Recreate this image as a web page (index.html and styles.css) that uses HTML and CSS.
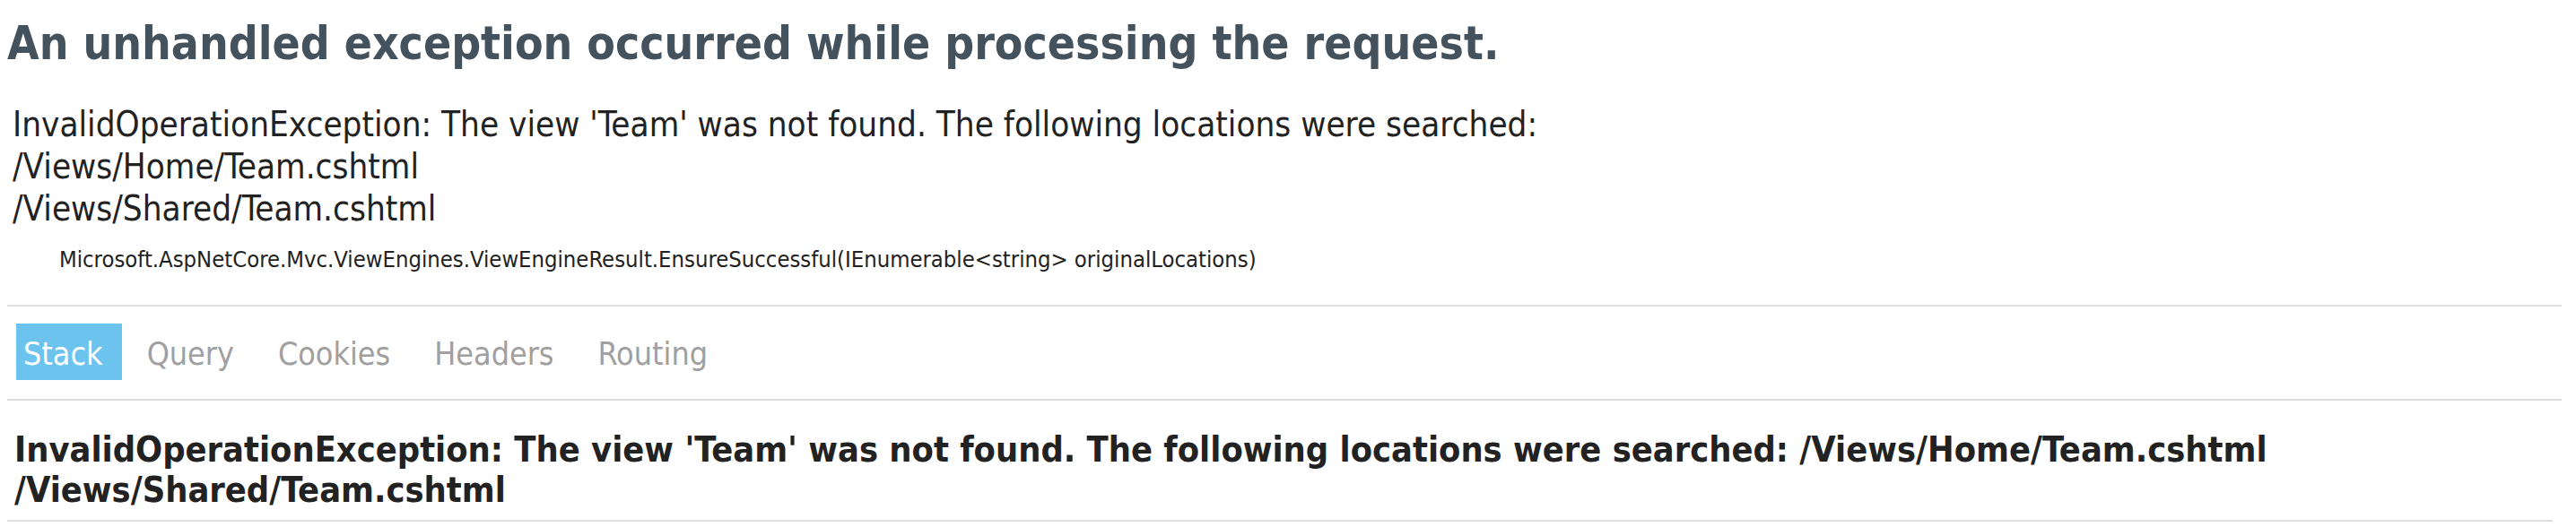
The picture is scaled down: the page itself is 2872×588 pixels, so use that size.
FILE: index.html
```html
<!DOCTYPE html>
<html>
<head>
<meta charset="utf-8">
<title>Internal Server Error</title>
<link rel="stylesheet" href="styles.css">
</head>
<body>
<h1 class="page-title">An unhandled exception occurred while processing the request.</h1>
<div class="titleerror">InvalidOperationException: The view 'Team' was not found. The following locations were searched:<br>/Views/Home/Team.cshtml<br>/Views/Shared/Team.cshtml</div>
<p class="location">Microsoft.AspNetCore.Mvc.ViewEngines.ViewEngineResult.EnsureSuccessful(IEnumerable&lt;string&gt; originalLocations)</p>
<ul class="tabs">
  <li class="tab selected">Stack</li>
  <li class="tab">Query</li>
  <li class="tab">Cookies</li>
  <li class="tab">Headers</li>
  <li class="tab">Routing</li>
</ul>
<div class="stackpage">
  <h2 class="stackerror">InvalidOperationException: The view 'Team' was not found. The following locations were searched: /Views/Home/Team.cshtml /Views/Shared/Team.cshtml</h2>
</div>
</body>
</html>
```
FILE: styles.css
```css
html, body {
  background: #fff;
}

body {
  margin: 0 16px 0 8px;
  font-family: "DejaVu Sans Condensed", "DejaVu Sans", sans-serif;
  font-stretch: condensed;
  color: #222;
}

.page-title {
  margin: 17px 0 29px;
  font-size: 51.2px;
  line-height: 63px;
  font-weight: bold;
  color: #44525e;
}

.titleerror {
  padding: 6px 6px 12px;
  font-size: 38.3px;
  line-height: 47px;
  font-weight: normal;
}

.location {
  margin: 6px 0 35px 58px;
  font-size: 25.4px;
  line-height: 31px;
}

.tabs {
  display: flex;
  list-style: none;
  margin: 0;
  padding: 19px 0 21px 10px;
  border-top: 2px solid #ddd;
  border-bottom: 2px solid #ddd;
  font-size: 35.6px;
  line-height: 43px;
}

.tab {
  padding: 12px 8px 8px;
  margin-right: 33px;
  color: #a0a0a0;
}

.tab.selected {
  padding-right: 21px;
  margin-right: 20px;
  background: #6cc3ee;
  color: #fff;
}

.stackpage {
  margin: 0;
}

.stackerror {
  margin: 20px 10px 0 0;
  padding: 12px 8px 11px;
  border-bottom: 2px solid #ddd;
  font-size: 39.4px;
  line-height: 45px;
  font-weight: bold;
  color: #222;
}
```
